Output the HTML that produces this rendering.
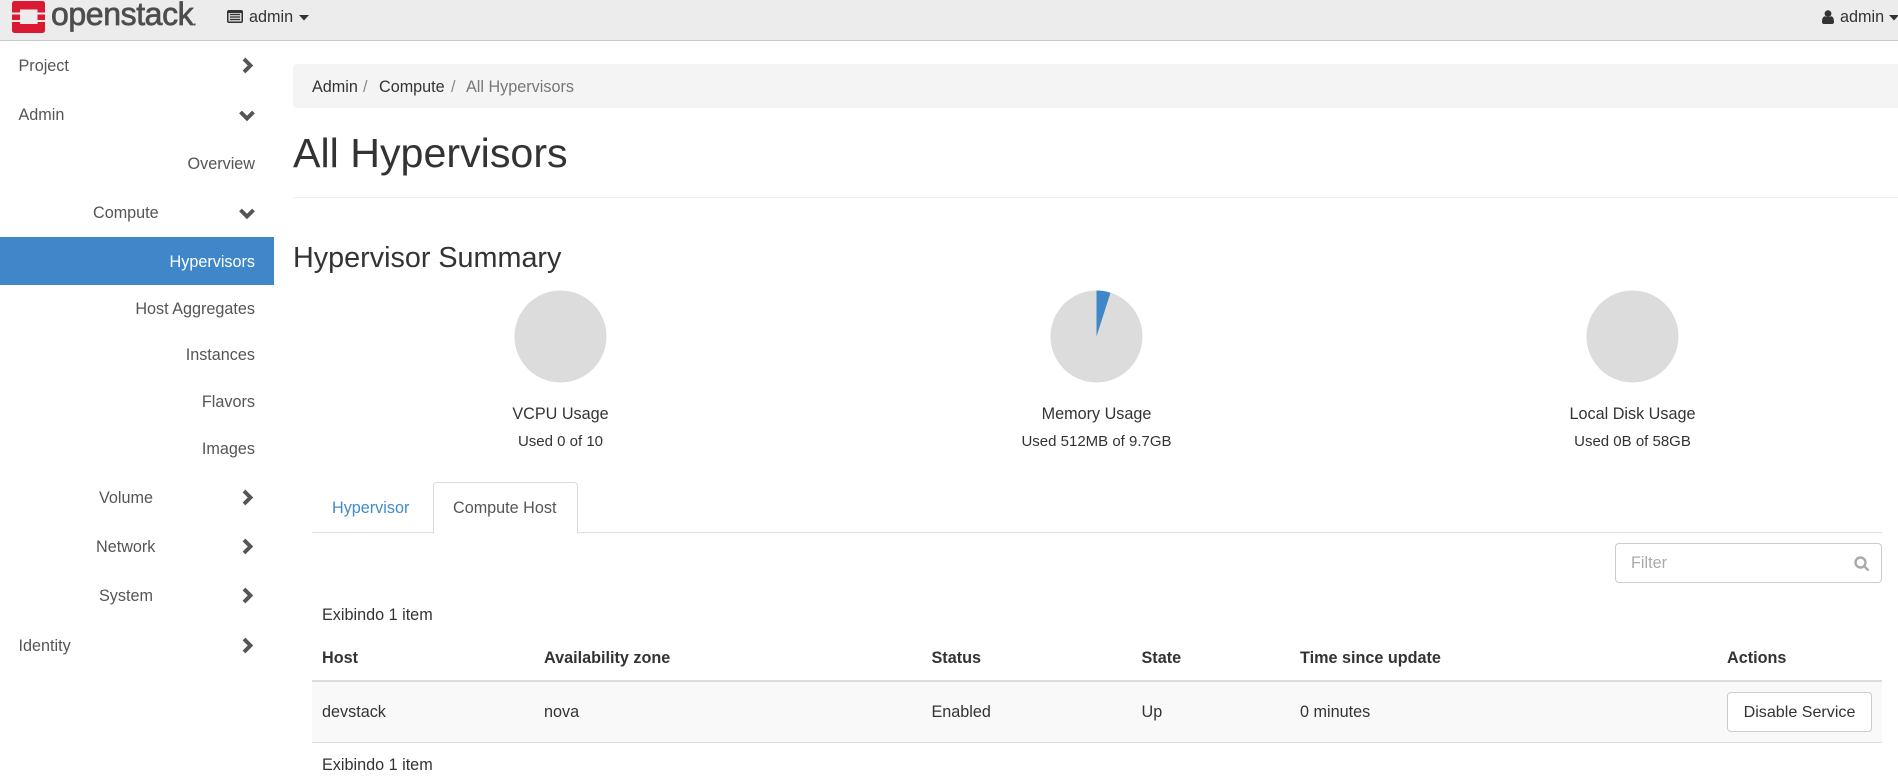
<!DOCTYPE html>
<html><head><meta charset="utf-8"><title>All Hypervisors</title>
<style>
html,body{margin:0;padding:0;width:1898px;height:781px;overflow:hidden;background:#fff;font-family:"Liberation Sans",sans-serif;font-size:16.2px;color:#333}
.a{position:absolute;white-space:nowrap;line-height:20px;margin-top:1px}
.nav{position:absolute;left:0;top:0;width:1898px;height:40px;background:#ececec;border-bottom:1px solid #c9c9c9}
.s{color:#555}
.r{text-align:right;right:1643px}
.b{font-weight:bold}
svg{position:absolute;overflow:visible}
.c{text-align:center;width:300px;margin-top:1px}
</style></head><body>
<div class="nav"></div>
<svg style="left:12px;top:1px" width="33" height="32" viewBox="0 0 33 32"><rect width="33" height="32" rx="2.5" fill="#da1a32"/><rect x="8" y="8.5" width="17.5" height="14.5" fill="#ececec"/><rect x="0" y="11.5" width="8" height="2" fill="#ececec"/><rect x="0" y="19" width="8" height="2" fill="#ececec"/><rect x="25.5" y="11.5" width="7.5" height="2" fill="#ececec"/><rect x="25.5" y="19" width="7.5" height="2" fill="#ececec"/></svg>
<div class="a" style="left:51px;top:-4px;margin-top:0;font-size:32px;line-height:36px;color:#4d4d4d;letter-spacing:-.4px;-webkit-text-stroke:.7px #4d4d4d">openstack<span style="font-size:10px;letter-spacing:0">.</span></div>
<svg style="left:227px;top:10px" width="16" height="13" viewBox="0 0 16 13"><rect width="16" height="13" rx="2" fill="#333"/><rect x="1.5" y="3" width="13" height="8.5" fill="#d8d8d8"/><path d="M3 4.500h10M3 7h10M3 9.500h10" stroke="#333" stroke-width="1.200"/></svg>
<div class="a" style="left:249px;top:6px">admin</div>
<svg style="left:299px;top:15px" width="10" height="6"><path d="M0 0h10L5 5.500z" fill="#333"/></svg>
<svg style="left:1822px;top:10px" width="12" height="14" viewBox="0 0 12 14"><circle cx="6" cy="3.600" r="3.400" fill="#333"/><path d="M0 12c0-4 1.200-5.600 3-5.800 1.700 1 4.300 1 6 0 1.800.2 3 1.800 3 5.800 0 1.200-.8 2-2 2H2c-1.200 0-2-.8-2-2z" fill="#333"/></svg>
<div class="a" style="left:1840px;top:6px">admin</div>
<svg style="left:1889px;top:15px" width="9" height="6"><path d="M0 0h10L5 5.500z" fill="#333"/></svg>

<div class="a s" style="left:18.500px;top:55px">Project</div>
<div class="a s" style="left:18.500px;top:104px">Admin</div>
<div class="a s r" style="top:153px">Overview</div>
<div class="a s" style="left:93px;top:202px">Compute</div>
<div style="position:absolute;left:0;top:237px;width:274px;height:48px;background:#3f87c9"></div>
<div class="a r" style="top:251px;color:#fff">Hypervisors</div>
<div class="a s r" style="top:298px">Host Aggregates</div>
<div class="a s r" style="top:344px">Instances</div>
<div class="a s r" style="top:391px">Flavors</div>
<div class="a s r" style="top:438px">Images</div>
<div class="a s" style="left:99px;top:487px">Volume</div>
<div class="a s" style="left:96px;top:536px">Network</div>
<div class="a s" style="left:99px;top:585px">System</div>
<div class="a s" style="left:18.500px;top:635px">Identity</div>
<svg style="left:0;top:0" width="274" height="700" fill="none" stroke="#555" stroke-width="3.900"><path d="M244 59l6.500 6.500-6.500 6.500M240.500 112l6.500 6.500 6.500-6.500M240.500 210l6.500 6.500 6.500-6.500M244 491l6.500 6.500-6.500 6.500M244 540l6.500 6.500-6.500 6.500M244 589l6.500 6.500-6.500 6.500M244 639l6.500 6.500-6.500 6.500"/></svg>

<div style="position:absolute;left:293px;top:64px;width:1605px;height:44px;background:#f4f4f4;border-radius:4px 0 0 4px"></div>
<div class="a" style="left:312px;top:76px">Admin</div><div class="a" style="left:363px;top:76px;color:#888">/</div>
<div class="a" style="left:379px;top:76px">Compute</div><div class="a" style="left:451px;top:76px;color:#888">/</div>
<div class="a" style="left:466px;top:76px;color:#777">All Hypervisors</div>
<div class="a" style="left:293px;top:130px;margin-top:0;font-size:41.200px;line-height:46px">All Hypervisors</div>
<div style="position:absolute;left:293px;top:197px;width:1605px;height:1px;background:#eee"></div>
<div class="a" style="left:293px;top:240px;margin-top:0;font-size:28.750px;line-height:36px">Hypervisor Summary</div>

<svg style="left:0;top:0" width="1898" height="400"><circle cx="560.500" cy="336.500" r="46" fill="#dcdcdc"/><circle cx="1096.500" cy="336.500" r="46" fill="#dcdcdc"/><path d="M1096.500 336.500V290.500A46 46 0 0 1 1110.500 292.700z" fill="#3f87c9"/><circle cx="1632.500" cy="336.500" r="46" fill="#dcdcdc"/></svg>
<div class="a c" style="left:410.500px;top:403px">VCPU Usage</div>
<div class="a c" style="left:410.500px;top:432px;font-size:15px;margin-top:0">Used 0 of 10</div>
<div class="a c" style="left:946.500px;top:403px">Memory Usage</div>
<div class="a c" style="left:946.500px;top:432px;font-size:15px;margin-top:0">Used 512MB of 9.7GB</div>
<div class="a c" style="left:1482.500px;top:403px">Local Disk Usage</div>
<div class="a c" style="left:1482.500px;top:432px;font-size:15px;margin-top:0">Used 0B of 58GB</div>

<div style="position:absolute;left:312px;top:532px;width:1570px;height:1px;background:#ddd"></div>
<div style="position:absolute;left:433px;top:482px;width:143px;height:51px;background:#fff;border:1px solid #ddd;border-bottom:0;border-radius:4px 4px 0 0;box-sizing:content-box"></div>
<div class="a" style="left:332px;top:497px;color:#428bca">Hypervisor</div>
<div class="a" style="left:453px;top:497px;color:#555">Compute Host</div>

<div style="position:absolute;left:1615px;top:543px;width:265px;height:38px;border:1px solid #ccc;border-radius:4px"></div>
<div class="a" style="left:1631px;top:552px;color:#aaa">Filter</div>
<svg style="left:1854px;top:556px" width="16" height="16" fill="none" stroke="#aaa" stroke-width="2.400"><circle cx="6.500" cy="6.500" r="5"/><path d="M10 10l4.500 4.500"/></svg>

<div class="a" style="left:322px;top:604px">Exibindo 1 item</div>
<div class="a b" style="left:322px;top:647px">Host</div>
<div class="a b" style="left:544px;top:647px">Availability zone</div>
<div class="a b" style="left:931.500px;top:647px">Status</div>
<div class="a b" style="left:1141.500px;top:647px">State</div>
<div class="a b" style="left:1300px;top:647px">Time since update</div>
<div class="a b" style="left:1727px;top:647px">Actions</div>
<div style="position:absolute;left:312px;top:680px;width:1570px;background:#f9f9f9;border-top:2px solid #ddd;border-bottom:1px solid #ddd;box-sizing:border-box;height:63px"></div>
<div class="a" style="left:322px;top:701px">devstack</div>
<div class="a" style="left:544px;top:701px">nova</div>
<div class="a" style="left:931.500px;top:701px">Enabled</div>
<div class="a" style="left:1141.500px;top:701px">Up</div>
<div class="a" style="left:1300px;top:701px">0 minutes</div>
<div class="a" style="left:1727px;top:692px;margin-top:0;width:143px;height:38px;background:#fff;border:1px solid #ccc;border-radius:4px;text-align:center;line-height:39px;font-size:16.100px">Disable Service</div>
<div class="a" style="left:322px;top:754px">Exibindo 1 item</div>
</body></html>
